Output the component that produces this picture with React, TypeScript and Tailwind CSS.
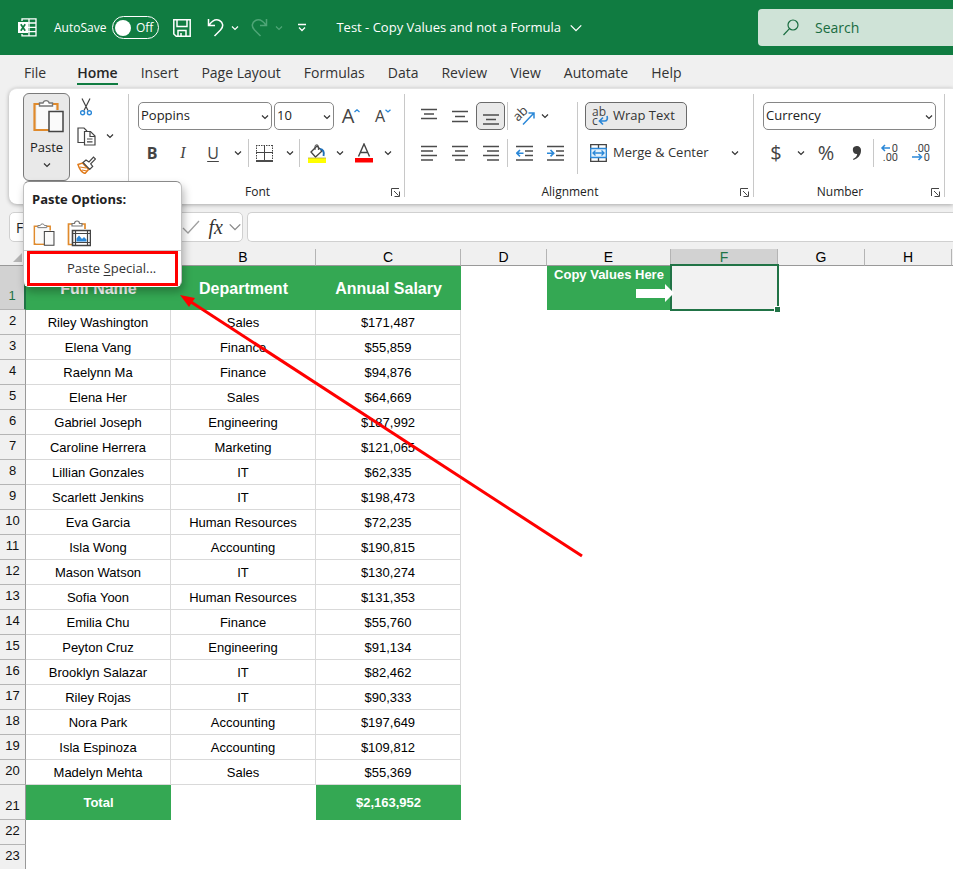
import React from "react";

type Kids = { children?: React.ReactNode };

const INK = "#444444";
const BLUE = "#2b88d8";

const people: [string, string, string][] = [
  ["Riley Washington", "Sales", "$171,487"],
  ["Elena Vang", "Finance", "$55,859"],
  ["Raelynn Ma", "Finance", "$94,876"],
  ["Elena Her", "Sales", "$64,669"],
  ["Gabriel Joseph", "Engineering", "$187,992"],
  ["Caroline Herrera", "Marketing", "$121,065"],
  ["Lillian Gonzales", "IT", "$62,335"],
  ["Scarlett Jenkins", "IT", "$198,473"],
  ["Eva Garcia", "Human Resources", "$72,235"],
  ["Isla Wong", "Accounting", "$190,815"],
  ["Mason Watson", "IT", "$130,274"],
  ["Sofia Yoon", "Human Resources", "$131,353"],
  ["Emilia Chu", "Finance", "$55,760"],
  ["Peyton Cruz", "Engineering", "$91,134"],
  ["Brooklyn Salazar", "IT", "$82,462"],
  ["Riley Rojas", "IT", "$90,333"],
  ["Nora Park", "Accounting", "$197,649"],
  ["Isla Espinoza", "Accounting", "$109,812"],
  ["Madelyn Mehta", "Sales", "$55,369"],
];

function Chevron({ color = "#333333", size = 8 }: { color?: string; size?: number }) {
  return (
    <svg width={size} height={size} viewBox="0 0 8 8" fill="none" stroke={color} strokeWidth={size > 8 ? 0.8 : 1.2} className="shrink-0">
      <path d="M1 2.500 4 5.500 7 2.500" />
    </svg>
  );
}

function IconButton({ label, className, children }: Kids & { label: string; className: string }) {
  return (
    <button type="button" aria-label={label} className={`flex h-7 shrink-0 items-center justify-center ${className}`}>
      {children}
    </button>
  );
}

function Divider() {
  return <span className="h-7 w-px shrink-0 bg-[#c8c8c8]" />;
}

function ExcelLogo() {
  return (
    <svg width="19" height="19" viewBox="0 0 19 19" fill="none">
      <path d="M4 3V.8h14v17H4V16" stroke="#fff" strokeWidth="1.300" />
      <path d="M11 1v17M10 5h8M10 9.300h8M10 13.700h8" stroke="#fff" strokeWidth="1.300" />
      <path d="M0 4h10v11H0z" fill="#fff" />
      <path d="m2.800 6.200 4.400 6.600M7.200 6.200l-4.400 6.600" stroke="#107c41" strokeWidth="1.700" />
    </svg>
  );
}

function TitleBar() {
  return (
    <header className="flex h-[55px] shrink-0 items-center bg-[#107c41] text-white">
      <div className="flex flex-1 items-center pl-[18px]">
        <ExcelLogo />
        <label htmlFor="autosave" className="ml-[17px] text-xs">AutoSave</label>
        <button id="autosave" type="button" role="switch" aria-checked="false" className="ml-[6px] flex h-[23px] w-[47px] shrink-0 items-center justify-between rounded-full border border-white pr-[5px] pl-[2px] text-xs">
          <span className="size-4 rounded-full bg-white" />
          Off
        </button>
        <button type="button" aria-label="Save" className="ml-[14px]">
          <svg width="18" height="18" viewBox="0 0 18 18" fill="none" stroke="#fff" strokeWidth="1.500">
            <path d="M.8.8h16.400v16.400H3.200L.8 15zM4 1v6.500h10V1M5 17v-5.500h8V17M8 14v3" />
          </svg>
        </button>
        <button type="button" aria-label="Undo" className="ml-4 flex w-8 items-center justify-between">
          <svg width="18" height="19" viewBox="0 0 18 19" fill="none" stroke="#fff" strokeWidth="1.500">
            <path d="M1.500 1v6.500H8M2 7.200C5 3 9 .8 12.500 2.500 16 4.200 17 8.500 13.500 12L7.500 18" />
          </svg>
          <Chevron color="#fff" />
        </button>
        <button type="button" aria-label="Redo" className="ml-[11px] flex w-[33px] items-center justify-between">
          <svg width="18" height="19" viewBox="0 0 18 19" fill="none" stroke="#4fa577" strokeWidth="1.500">
            <path d="M16.500 1v6.500H10M16 7.200C13 3 9 .8 5.500 2.500 2 4.200 1 8.500 4.500 12l6 6" />
          </svg>
          <Chevron color="#4fa577" />
        </button>
        <button type="button" aria-label="Customize quick access toolbar" className="ml-[14px]">
          <svg width="10" height="9" viewBox="0 0 10 9" fill="none" stroke="#fff" strokeWidth="1.300">
            <path d="M1 1.500h8M2 4.500l3 3 3-3" />
          </svg>
        </button>
        <button type="button" className="ml-[29px] flex items-center gap-2 text-[13px] whitespace-nowrap">
          Test - Copy Values and not a Formula
          <Chevron color="#fff" size={14} />
        </button>
      </div>
      <label className="flex h-[37px] w-[195px] shrink-0 items-center gap-4 rounded-l bg-[#cfe3d7] pl-[25px]">
        <svg width="16" height="17" viewBox="0 0 16 17" fill="none" stroke="#186c3f" strokeWidth="1.200" className="shrink-0">
          <circle cx="10" cy="6" r="5" />
          <path d="M6.500 9.700.5 16" />
        </svg>
        <input type="text" aria-label="Search" placeholder="Search" className="w-full min-w-0 bg-transparent text-sm outline-none placeholder:text-[#186c3f]" />
      </label>
    </header>
  );
}

const tabs = ["Insert", "Page Layout", "Formulas", "Data", "Review", "View", "Automate", "Help"];

function Tabs() {
  return (
    <nav className="flex h-[33px] shrink-0 items-start gap-[23px] pt-[6px] pl-6 text-sm leading-6 text-[#333333]">
      <button type="button" className="mr-2 h-6">File</button>
      <button type="button" className="h-6 border-b-2 border-[#107c41] pt-[2px] leading-5 font-semibold text-[#262626]">Home</button>
      {tabs.map((t) => (
        <button key={t} type="button" className="h-6 whitespace-nowrap">{t}</button>
      ))}
    </nav>
  );
}

function ClipboardIcon({ w, h }: { w: number; h: number }) {
  return (
    <svg width={w} height={h} viewBox="0 0 32 36" fill="none">
      <path d="M7 6H2v26h15M20 6h5v6" stroke="#e08a2c" strokeWidth="2.200" />
      <path d="M4 7h19v6h-7v18H4z" fill="#fafafa" />
      <path d="M7 8V5h3.500a3.200 3.200 0 0 1 6.200 0H20v3z" fill="#fff" stroke="#777" strokeWidth="1.400" />
      <path d="M16.500 13.500h14v20h-14z" fill="#fafafa" stroke={INK} strokeWidth="1.500" />
    </svg>
  );
}

function PictureClipboardIcon() {
  return (
    <svg width="24" height="27" viewBox="0 0 24 27" fill="none">
      <path d="M5 4H1.500v20.500H5M14 4h4v5" stroke="#e08a2c" strokeWidth="1.700" />
      <path d="M5 6V3.500h2.500a2.500 2.500 0 0 1 5 0H15V6z" fill="#fff" stroke="#777" strokeWidth="1.200" />
      <path d="M5.500 10.500h18v15h-18z" fill="#fff" stroke={INK} strokeWidth="1.600" />
      <path d="M8.500 10.500v15M20.500 10.500v15M5.500 13.500h18M5.500 22.500h18" stroke={INK} strokeWidth="1.200" />
      <path d="M9.500 21.500v-3l2.500-3 3 3.500 2-2 2.500 2.500v2z" fill="#2b88d8" />
    </svg>
  );
}

function PasteMenu() {
  return (
    <div role="menu" className="absolute top-full left-0 z-20 flex h-[106px] w-[159px] flex-col rounded-md border border-[#8a8a8a] border-x-[#c0c0c0] border-b-transparent bg-white shadow-[2px_5px_8px_rgba(0,0,0,0.28)]">
      <p className="px-2 pt-[7px] text-[13px] leading-5 font-bold whitespace-nowrap text-[#222222]">Paste Options:</p>
      <div className="flex flex-1 items-end gap-3 px-[9px] pb-[3px]">
        <button type="button" role="menuitem" aria-label="Paste"><ClipboardIcon w={22} h={25} /></button>
        <button type="button" role="menuitem" aria-label="Picture"><PictureClipboardIcon /></button>
      </div>
      <div className="border-t border-[#c8c8c8] px-[3px]">
        <button type="button" role="menuitem" className="flex h-[35px] w-[151px] items-center border-3 border-[#ff0000] pl-[37px] text-[13px] whitespace-nowrap text-[#333333]">
          <span>Paste <span className="underline underline-offset-2">S</span>pecial...</span>
        </button>
      </div>
    </div>
  );
}

function Clipboard() {
  return (
    <section aria-label="Clipboard" className="flex w-[119px] shrink-0 pt-1 pl-[14px]">
      <div className="relative h-[88px]">
        <button type="button" className="flex h-full w-[47px] flex-col items-center rounded-md border border-[#7a7a7a] bg-[#e9e9e9] pt-1 text-[13px]">
          <span className="pl-1"><ClipboardIcon w={33} h={36} /></span>
          <span className="mt-[3px] leading-5">Paste</span>
          <span className="mt-1"><Chevron /></span>
        </button>
        <PasteMenu />
      </div>
      <div className="flex flex-col gap-px pl-[5px]">
        <IconButton label="Cut" className="w-[22px]">
          <svg width="12" height="18" viewBox="0 0 12 18" fill="none">
            <path d="M2 .5 8 12.500M10 .5 4 12.500" stroke={INK} strokeWidth="1.200" />
            <circle cx="2.600" cy="14.800" r="2" stroke={BLUE} strokeWidth="1.400" />
            <circle cx="9.400" cy="14.800" r="2" stroke={BLUE} strokeWidth="1.400" />
          </svg>
        </IconButton>
        <div className="flex">
          <IconButton label="Copy" className="w-[22px]">
            <svg width="19" height="19" viewBox="0 0 19 19" fill="none" stroke={INK} strokeWidth="1.200">
              <path d="M7 15.500H1V1h6l3 3" />
              <path d="M7.500 4.500h6l4.500 4.500v9H7.500z" fill="#fff" />
              <path d="M13 4.500V9.500h5M10 12h5.500M10 14.800h5.500" />
            </svg>
          </IconButton>
          <IconButton label="Copy options" className="w-[26px]"><Chevron /></IconButton>
        </div>
        <IconButton label="Format painter" className="w-[22px]">
          <svg width="19" height="18" viewBox="0 0 19 18" fill="none" strokeWidth="1.200">
            <path d="M1 8.500 5.500 7l6 6.500-3.500 4c-3-1-5.500-4-7-9z" fill="#fff" stroke="#e07b1c" strokeWidth="1.500" />
            <path d="m3 11 6 1M5 14l5 1" stroke="#e07b1c" />
            <path d="m6 6.500 3-2.500 3 2 4.500-5 2 2-4.800 4.800 2 2.700-3 3z" fill="#fff" stroke={INK} />
          </svg>
        </IconButton>
      </div>
    </section>
  );
}

function Group({ title, className, children }: Kids & { title: string; className: string }) {
  return (
    <section aria-label={title} className={`flex shrink-0 ${className}`}>
      <span className="mt-[5px] h-[103px] w-px shrink-0 bg-[#c8c8c8]" />
      <div className="flex min-w-0 flex-1 flex-col">
        <div className="flex-1 pt-[13px]">{children}</div>
        <footer className="flex h-[22px] items-center pb-[2px]">
          <h2 className="flex-1 text-center text-xs">{title}</h2>
          <button type="button" aria-label={`${title} settings`} className="flex w-[18px] justify-center">
            <svg width="9" height="9" viewBox="0 0 9 9" fill="none" stroke={INK}>
              <path d="M.5 8V.5H8M3 3l4.500 4.500M8.500 3.500v5h-5" />
            </svg>
          </button>
        </footer>
      </div>
    </section>
  );
}

function Combo({ label, value, className }: { label: string; value: string; className: string }) {
  return (
    <div className={`relative shrink-0 ${className}`}>
      <select aria-label={label} defaultValue={value} className="h-7 w-full appearance-none rounded-[5px] border border-[#868686] bg-white px-[2px] text-[13px] text-[#222222]">
        <option>{value}</option>
      </select>
      <span className="pointer-events-none absolute top-[11px] right-[3px]"><Chevron /></span>
    </div>
  );
}

function FontGroup() {
  return (
    <Group title="Font" className="w-[276px]">
      <div className="flex items-center gap-[2px] pl-[9px]">
        <Combo label="Font" value="Poppins" className="w-[134px]" />
        <Combo label="Font size" value="10" className="w-[60px]" />
        <IconButton label="Increase font size" className="w-[30px] text-xl text-[#444444]">
          A<svg width="6" height="14" viewBox="0 0 6 14" fill="none" stroke={BLUE} strokeWidth="1.300"><path d="M.5 3 3 .8 5.500 3" /></svg>
        </IconButton>
        <IconButton label="Decrease font size" className="w-[30px] text-base text-[#444444]">
          A<svg width="6" height="14" viewBox="0 0 6 14" fill="none" stroke={BLUE} strokeWidth="1.300"><path d="M.5.8 3 3 5.500.8" /></svg>
        </IconButton>
      </div>
      <div className="mt-[9px] flex items-center pl-[7px] text-base text-[#444444]">
        <IconButton label="Bold" className="w-8 font-bold">B</IconButton>
        <IconButton label="Italic" className="w-[30px] font-['Liberation_Serif',serif] italic">I</IconButton>
        <IconButton label="Underline" className="w-[30px] underline underline-offset-2">U</IconButton>
        <IconButton label="Underline styles" className="w-5"><Chevron /></IconButton>
        <Divider />
        <IconButton label="Borders" className="w-[31px]">
          <svg width="17" height="17" viewBox="0 0 17 17" fill="none" stroke={INK}>
            <path d="M.5 0v15M16.500 0v15M0 .5h17" strokeDasharray="1.500 1" />
            <path d="M8.500 0v15M0 7.500h17" />
            <path d="M0 16h17" stroke="#111" strokeWidth="1.500" />
          </svg>
        </IconButton>
        <IconButton label="Border styles" className="w-[19px]"><Chevron /></IconButton>
        <Divider />
        <IconButton label="Fill color" className="w-[33px]">
          <svg width="18" height="19" viewBox="0 0 18 19" fill="none">
            <path d="m3 8 6-6 5 5-6.500 6z" fill="#fff" stroke={INK} strokeWidth="1.300" />
            <path d="M7 6V2.500a1.700 1.700 0 0 1 3.400 0V6" stroke={INK} />
            <path d="M12 5c3 0 4.500 3 3.500 7" stroke="#1f6fb8" strokeWidth="1.900" />
            <path d="M0 14h18v5H0z" fill="#ffff00" />
            <path d="M0 14h18" stroke="#b5a642" strokeWidth=".8" />
          </svg>
        </IconButton>
        <IconButton label="Fill color choices" className="w-[14px]"><Chevron /></IconButton>
        <IconButton label="Font color" className="w-[34px]">
          <svg width="18" height="20" viewBox="0 0 18 20" fill="none">
            <path d="M3.500 13.500 9 1l5.500 12.500M5.500 9.500h7" stroke={INK} strokeWidth="1.400" />
            <path d="M0 15h18v4.500H0z" fill="#ff0000" />
          </svg>
        </IconButton>
        <IconButton label="Font color choices" className="w-[14px]"><Chevron /></IconButton>
      </div>
    </Group>
  );
}

function Lines({ d }: { d: string }) {
  return (
    <svg width="16" height="17" viewBox="0 0 16 17" fill="none" stroke="#4c4c4c" strokeWidth="1.300">
      <path d={d} />
    </svg>
  );
}

function Indent({ arrow }: { arrow: string }) {
  return (
    <svg width="17" height="17" viewBox="0 0 17 17" fill="none" strokeWidth="1.300">
      <path d="M0 1.500h17M9 6h8M9 10.500h8M0 15h17" stroke="#4c4c4c" />
      <path d={arrow} stroke={BLUE} strokeWidth="1.600" />
    </svg>
  );
}

function AlignmentGroup() {
  return (
    <Group title="Alignment" className="w-[349px]">
      <div className="flex">
        <div className="flex w-[172px] shrink-0 flex-col gap-[9px] pl-2">
          <div className="flex items-center">
            <IconButton label="Top align" className="w-[31px]"><Lines d="M0 1.500h16M3 6h10M0 10.500h16" /></IconButton>
            <IconButton label="Middle align" className="w-[31px]"><Lines d="M0 3.500h16M3 8.500h10M0 13.500h16" /></IconButton>
            <IconButton label="Bottom align" className="mx-px w-[29px] rounded-[5px] border border-[#6a6a6a] bg-[#e9e9e9]"><Lines d="M0 7h16M3 11.500h10M0 16h16" /></IconButton>
            <span className="w-px" />
            <Divider />
            <IconButton label="Orientation" className="w-[34px]">
              <svg width="20" height="18" viewBox="0 0 20 18" fill="none" className="overflow-visible">
                <text x="2" y="13" fontSize="13" fill={INK} transform="rotate(-45 5 13)">ab</text>
                <path d="M8 17.500 18.500 6.500M13.500 6H19v5.500" stroke={BLUE} strokeWidth="1.500" />
              </svg>
            </IconButton>
            <IconButton label="Orientation choices" className="w-[5px]"><Chevron /></IconButton>
          </div>
          <div className="flex items-center">
            <IconButton label="Align left" className="w-[31px]"><Lines d="M0 1.500h16M0 6h12M0 10.500h16M0 15h12" /></IconButton>
            <IconButton label="Center" className="w-[31px]"><Lines d="M0 1.500h16M3 6h10M0 10.500h16M3 15h10" /></IconButton>
            <IconButton label="Align right" className="w-[31px]"><Lines d="M0 1.500h16M4 6h12M0 10.500h16M4 15h12" /></IconButton>
            <span className="w-px" />
            <Divider />
            <IconButton label="Decrease indent" className="w-[32px]"><Indent arrow="M7.500 8.200H1M4 5 .8 8.200 4 11.400" /></IconButton>
            <IconButton label="Increase indent" className="w-[31px]"><Indent arrow="M0 8.200h6.500M3.500 5l3.200 3.200-3.200 3.200" /></IconButton>
          </div>
        </div>
        <span className="h-[72px] w-px shrink-0 bg-[#c8c8c8]" />
        <div className="flex flex-col gap-[9px] pl-[7px] text-[13px] text-[#333333]">
          <button type="button" className="flex h-7 w-[102px] items-center gap-1 rounded-[5px] border border-[#6a6a6a] bg-[#e9e9e9] pl-[6px] whitespace-nowrap">
            <svg width="17" height="19" viewBox="0 0 17 19" fill="none" className="shrink-0 overflow-visible">
              <text x="0" y="9" fontSize="12" fill={INK}>ab</text>
              <text x="0" y="18" fontSize="12" fill={INK}>c</text>
              <path d="M15 9c1 3 0 5-2.500 5H8M11 10.500 7.500 14l3.500 3.500" stroke={BLUE} strokeWidth="1.700" />
            </svg>
            Wrap Text
          </button>
          <div className="flex items-center">
            <button type="button" className="flex h-7 w-[139px] items-center gap-[6px] pl-[5px] whitespace-nowrap">
              <svg width="17" height="18" viewBox="0 0 17 18" fill="none" className="shrink-0">
                <path d="M.7.7h15.600v16.600H.7zM8.500.5v4M8.500 13.500v4" stroke={INK} strokeWidth="1.300" />
                <path d="M.7 4.500h15.600v9H.7z" fill="#e3f1fb" stroke={BLUE} strokeWidth="1.300" />
                <path d="M3 9h11M5.500 6.500 3 9l2.500 2.500M11.500 6.500 14 9l-2.500 2.500" stroke={BLUE} strokeWidth="1.300" />
              </svg>
              Merge &amp; Center
            </button>
            <IconButton label="Merge choices" className="w-[22px]"><Chevron /></IconButton>
          </div>
        </div>
      </div>
    </Group>
  );
}

function Decimal({ top, bottom, arrow }: { top: string; bottom: string; arrow: string }) {
  return (
    <svg width="20" height="20" viewBox="0 0 20 20" fill="none" className="overflow-visible font-['Roboto',sans-serif]">
      <text x="18" y="9" textAnchor="end" fontSize="11" fill={INK}>{top}</text>
      <text x="18" y="18" textAnchor="end" fontSize="11" fill={INK}>{bottom}</text>
      <path d={arrow} stroke={BLUE} strokeWidth="1.500" />
    </svg>
  );
}

function NumberGroup() {
  return (
    <Group title="Number" className="w-[191px]">
      <div className="pr-2 pl-[9px]">
        <Combo label="Number format" value="Currency" className="w-full" />
      </div>
      <div className="mt-[9px] flex items-center pl-[7px] text-xl text-[#444444]">
        <IconButton label="Accounting format" className="w-[30px]">$</IconButton>
        <IconButton label="Accounting choices" className="w-5"><Chevron /></IconButton>
        <IconButton label="Percent style" className="w-[30px]">%</IconButton>
        <IconButton label="Comma style" className="w-8">
          <svg width="10" height="16" viewBox="0 0 10 16"><path d="M4.500 1a4 4 0 0 1 4.500 4.500C9 10 6 13.500 1.500 15l-.5-1c2.500-1 4-2.800 4.200-5A4 4 0 1 1 4.500 1z" fill="#3c3c3c" /></svg>
        </IconButton>
        <Divider />
        <IconButton label="Increase decimal" className="w-8"><Decimal top="0" bottom=".00" arrow="M10 5H1.500M5 2 2 5l3 3" /></IconButton>
        <IconButton label="Decrease decimal" className="w-8"><Decimal top=".00" bottom="0" arrow="M0 14h9M6.500 11l3 3-3 3" /></IconButton>
      </div>
    </Group>
  );
}

function FormulaBar() {
  return (
    <div className="flex h-[30px] shrink-0 pl-[9px]">
      <input aria-label="Name box" defaultValue="F1" className="h-full w-[84px] rounded-[5px] border border-[#d0d0d0] bg-white px-[6px] text-sm text-[#222222]" />
      <div className="ml-4 flex h-full w-[134px] items-center justify-end rounded-[5px] border border-[#d0d0d0] bg-white">
        <button type="button" aria-label="Enter" className="mr-[9px]">
          <svg width="18" height="14" viewBox="0 0 18 14" fill="none" stroke="#a0a0a0" strokeWidth="1.300"><path d="m1 8 5 5L17 1" /></svg>
        </button>
        <button type="button" aria-label="Insert function" className="font-['Liberation_Serif',serif] text-xl leading-5 text-[#333333] italic">fx</button>
        <button type="button" aria-label="Function choices" className="ml-[5px]"><Chevron color="#888888" size={14} /></button>
      </div>
      <input aria-label="Formula" className="ml-1 h-full min-w-0 flex-1 rounded-l-[5px] border border-r-0 border-[#d0d0d0] bg-white px-2 text-sm" />
    </div>
  );
}

function RowHead({ n, selected }: { n: number; selected?: boolean }) {
  return (
    <th
      scope="row"
      className={`border-b border-b-[#b4b4b4] pb-[3px] align-bottom text-[13px] leading-5 font-normal ${
        selected ? "border-r-2 border-r-[#217346] bg-[#d2d2d2] text-[#217346]" : "border-r border-r-[#999999] bg-[#f0f0f0] text-[#111111]"
      }`}
    >
      {n}
    </th>
  );
}

function Sheet() {
  return (
    <main className="min-h-0 flex-1 overflow-hidden bg-white font-['Liberation_Sans',Arial,sans-serif]">
      <table className="w-full table-fixed border-separate border-spacing-0 text-center text-[13px] text-black">
        <colgroup>
          <col className="w-[26px]" />
          <col className="w-[145px]" />
          <col className="w-[145px]" />
          <col className="w-[145px]" />
          <col className="w-[86px]" />
          <col className="w-[124px]" />
          <col className="w-[107px]" />
          <col className="w-[87px]" />
          <col className="w-[87px]" />
          <col />
        </colgroup>
        <thead>
          <tr className="h-[17px] bg-[#f0f0f0] text-sm leading-4">
            <td className="border-b border-[#999999]">
              <svg width="9" height="9" viewBox="0 0 9 9" className="ml-[13px]"><path d="M9 0v9H0z" fill="#b4b4b4" /></svg>
            </td>
            {["A", "B", "C", "D", "E", "F", "G", "H"].map((c) => (
              <th
                key={c}
                scope="col"
                className={`border-r border-b border-[#999999] border-r-[#b4b4b4] font-normal ${c === "F" ? "bg-[#d2d2d2] text-[#217346]" : ""}`}
              >
                {c}
              </th>
            ))}
            <td className="border-b border-[#999999]" />
          </tr>
        </thead>
        <tbody>
          <tr className="h-11 text-base font-bold text-white">
            <RowHead n={1} selected />
            <td className="bg-[#34a853] pt-[2px]">Full Name</td>
            <td className="bg-[#34a853] pt-[2px]">Department</td>
            <td className="bg-[#34a853] pt-[2px]">Annual Salary</td>
            <td />
            <td className="bg-[#34a853] align-top text-[13px] leading-[18px] whitespace-nowrap">
              Copy Values Here
              <svg width="38" height="18" viewBox="0 0 38 18" className="relative z-10 -mr-[3px] ml-auto"><path d="M0 5h29V0l9 9-9 9v-4H0z" fill="#fff" /></svg>
            </td>
            <td className="relative bg-[#f2f2f2]">
              <span className="absolute -inset-px -top-[2px] border-2 border-[#217346]" />
              <span className="absolute -right-[3px] -bottom-[3px] size-[7px] border border-white bg-[#217346]" />
            </td>
            <td colSpan={3} />
          </tr>
          {people.map((p, i) => (
            <tr key={p[0]} className="h-[25px]">
              <RowHead n={i + 2} />
              {p.map((v, j) => (
                <td key={j} className="border-r border-b border-[#d9d9d9] pt-[2px] leading-5 whitespace-nowrap">{v}</td>
              ))}
            </tr>
          ))}
          <tr className="h-[35px] font-bold text-white">
            <RowHead n={21} />
            <td className="bg-[#34a853]">Total</td>
            <td />
            <td className="bg-[#34a853]">$2,163,952</td>
          </tr>
          <tr className="h-[25px]"><RowHead n={22} /></tr>
          <tr className="h-[25px]"><RowHead n={23} /></tr>
        </tbody>
      </table>
    </main>
  );
}

export default function App() {
  return (
    <div className="relative flex h-screen flex-col overflow-hidden bg-[#f0f0f0] font-['Open_Sans','Noto_Sans',sans-serif] text-[#222222]">
      <TitleBar />
      <Tabs />
      <div className="mb-2 ml-[9px] flex h-[116px] shrink-0 rounded-l-lg border-t border-[#e4e4e4] bg-white shadow-[0_1px_4px_rgba(0,0,0,0.3)]">
        <Clipboard />
        <FontGroup />
        <AlignmentGroup />
        <NumberGroup />
        <span className="mt-[5px] h-[103px] w-px bg-[#c8c8c8]" />
      </div>
      <FormulaBar />
      <div className="h-[7px] shrink-0" />
      <Sheet />
      <svg width="410" height="270" viewBox="0 0 410 270" fill="none" className="pointer-events-none absolute top-[290px] left-[176px] z-30">
        <path d="M12 10 406 266" stroke="#ff0000" strokeWidth="3" />
        <path d="m4 5 15 3-6 9z" fill="#ff0000" />
      </svg>
    </div>
  );
}
